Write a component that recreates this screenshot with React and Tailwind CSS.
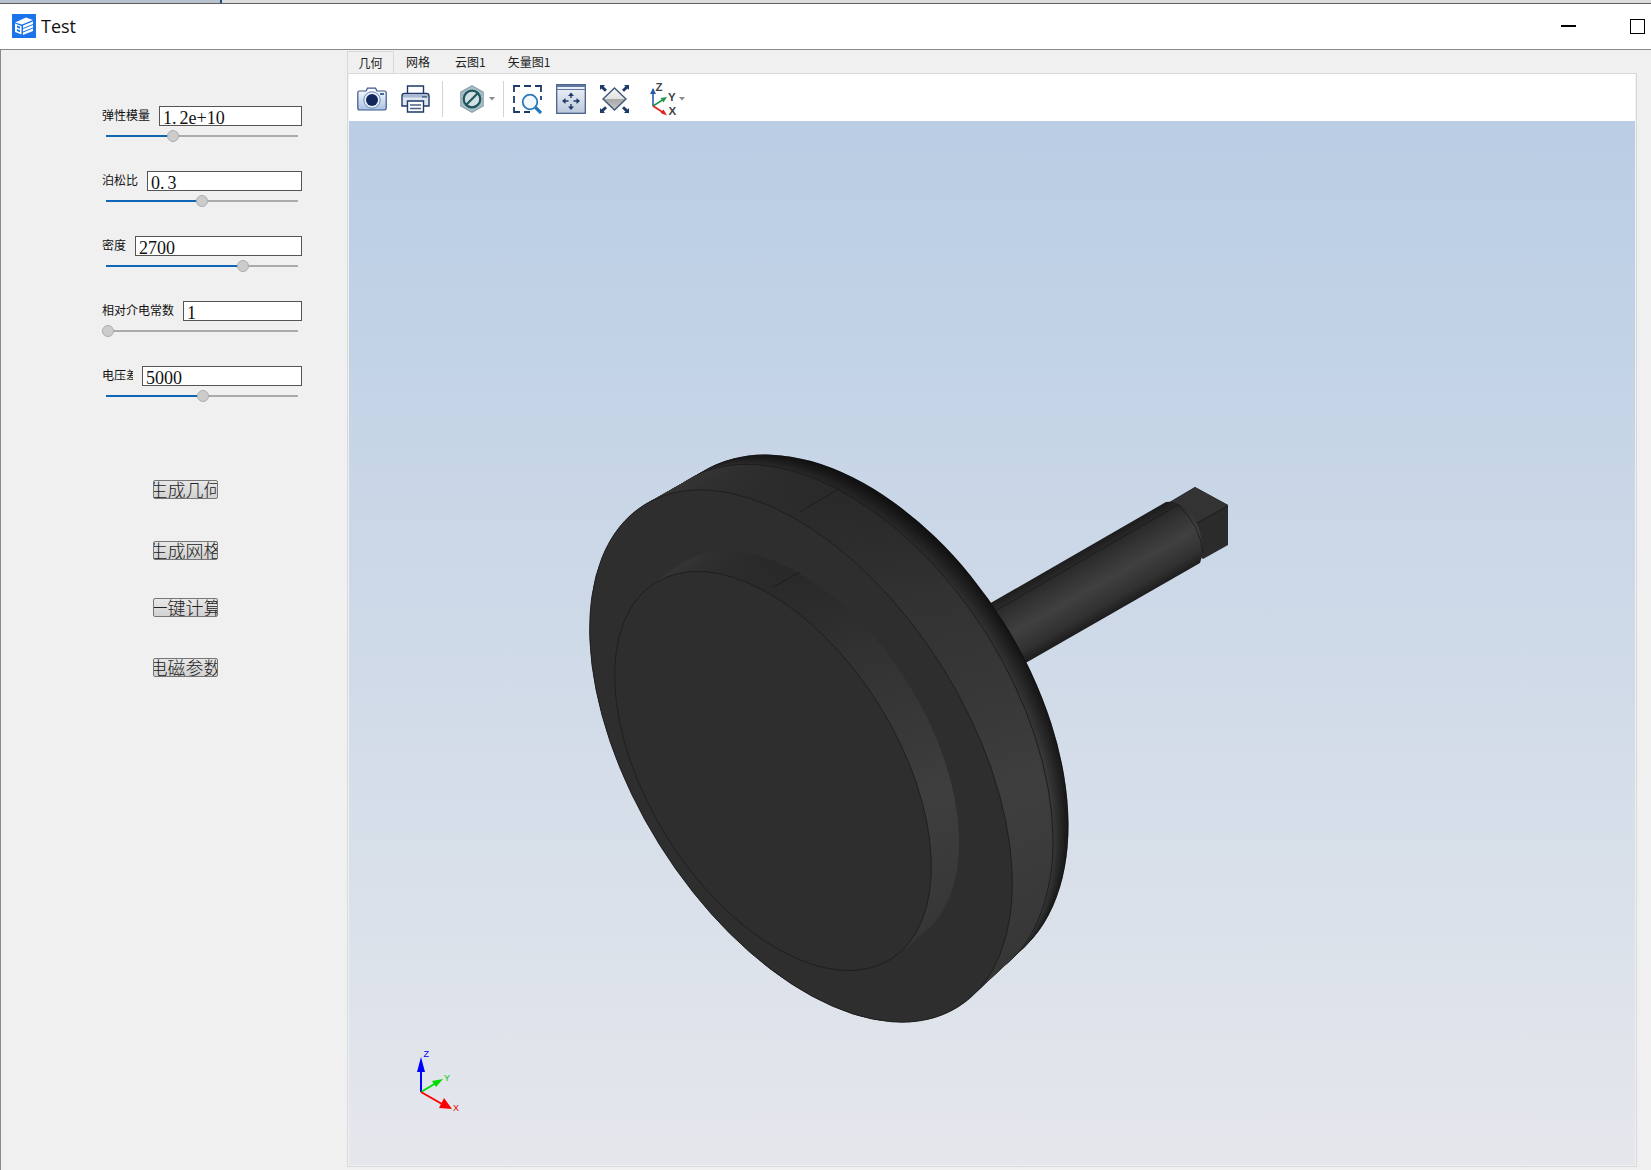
import React from "react";

const NAVY = "#1f3a68";
const CJK = '"Noto Sans CJK SC","Noto Sans",sans-serif';

const params = [
  { label: "弹性模量", value: "1.2e+10", inputW: "w-[143px]", labelW: "w-[50px]", pct: 67 },
  { label: "泊松比", value: "0.3", inputW: "w-[155px]", labelW: "w-[38px]", pct: 96 },
  { label: "密度", value: "2700", inputW: "w-[167px]", labelW: "w-[26px]", pct: 137 },
  { label: "相对介电常数", value: "1", inputW: "w-[119px]", labelW: "w-[74px]", pct: 2 },
  { label: "电压差", value: "5000", inputW: "w-[160px]", labelW: "w-[31px]", pct: 97 },
];

function Value({ text }) {
  const i = text.indexOf(".");
  if (i < 0) return <>{text}</>;
  return (
    <>
      {text.slice(0, i + 1)}
      <span className="inline-block w-[3px]" />
      {text.slice(i + 1)}
    </>
  );
}

function Param({ p }) {
  return (
    <div className="h-[65px] w-[200px]">
      <div className="flex h-[20px] items-center justify-between">
        <span className={`${p.labelW} -mt-[2px] overflow-hidden whitespace-nowrap text-[12px] leading-[20px] text-[#111]`}>
          {p.label}
        </span>
        <div className={`${p.inputW} h-[20px] border border-[#555] bg-white pl-[3px] pt-[1px] font-['Liberation_Serif'] text-[18px] leading-[20px] text-[#111]`}>
          <Value text={p.value} />
        </div>
      </div>
      <div className="relative ml-[4px] mt-[4px] h-[12px] w-[192px]">
        <div className="absolute left-0 right-0 top-[5px] h-[2px] bg-[#ababab]" />
        <div className="absolute left-0 top-[5px] h-[2px] bg-[#0f66b4]" style={{ width: p.pct }} />
        <div
          className="absolute top-0 h-[12px] w-[12px] rounded-full border border-[#adadad] bg-[#cccccc]"
          style={{ left: p.pct - 6 }}
        />
      </div>
    </div>
  );
}

function ActionButton({ label, className }) {
  return (
    <div
      className={`${className} ml-[51px] flex h-[19px] w-[65px] items-center justify-center overflow-hidden whitespace-nowrap rounded-[2px] border border-[#777] bg-gradient-to-b from-[#e8e8e8] to-[#d2d2d2] text-[18px] font-light leading-[19px] text-[#222]`}
    >
      {label}
    </div>
  );
}

function TitleIcon() {
  return (
    <svg width="24" height="24" viewBox="0 0 24 24" className="shrink-0">
      <rect width="24" height="24" fill="#1a73e8" />
      <path d="M3 8.5 L14 3.5 L21 6 L10 10.5Z" fill="#ffffff" />
      <path d="M3 9.5 L9.5 12 V20.5 L3 18Z" fill="#ffffff" />
      <path d="M5 11.5 L8 12.7 V14.8 L5 13.6Z M5 15 L8 16.2 V18.3 L5 17.1Z" fill="#1a73e8" />
      <path d="M11 11.5 L21 7.5 V10 L11 14Z M11 15 L21 11 V13.5 L11 17.5Z M11 18.5 L21 14.5 V17 L11 21Z" fill="#ffffff" />
    </svg>
  );
}

function CameraIcon() {
  return (
    <svg width="30" height="24" viewBox="0 0 30 24" className="shrink-0">
      <defs>
        <linearGradient id="cam" x1="0" y1="0" x2="0" y2="1">
          <stop offset="0" stopColor="#ffffff" />
          <stop offset="1" stopColor="#a9c2e4" />
        </linearGradient>
      </defs>
      <path d="M2.5 4 H9 L10.5 1.2 H18.5 L20 4 H27.5 Q29.2 4 29.2 5.8 V21 Q29.2 23 27.5 23 H2.5 Q.8 23 .8 21 V5.8 Q.8 4 2.5 4Z" fill="url(#cam)" stroke="#3a5788" strokeWidth="1.2" />
      <circle cx="15" cy="13" r="8.2" fill="#e8f0fa" stroke="#6f8db8" strokeWidth="1" />
      <circle cx="15" cy="13" r="6" fill="#14275c" />
      <rect x="23" y="6" width="4" height="2" fill="#4a6796" />
    </svg>
  );
}

function PrinterIcon() {
  return (
    <svg width="29" height="28" viewBox="0 0 29 28" className="shrink-0">
      <path d="M6.5 9 V1 H22.5 V9" fill="#ffffff" stroke={NAVY} strokeWidth="1.4" />
      <path d="M1 11 Q1 8.5 3.5 8.5 H25.5 Q28 8.5 28 11 V21 H1Z" fill="#dfe6f0" stroke={NAVY} strokeWidth="1.4" />
      <rect x="2" y="9.5" width="25" height="3" fill="#a9bbd2" />
      <rect x="21" y="11" width="5" height="1.6" fill="#52688c" />
      <path d="M6.5 16 H22.5 V27 H6.5Z" fill="#ffffff" stroke={NAVY} strokeWidth="1.4" />
      <path d="M9 20 H20 M9 23.5 H20" stroke="#4a6186" strokeWidth="1.3" />
    </svg>
  );
}

function HexIcon() {
  return (
    <svg width="24" height="28" viewBox="0 0 24 28" className="shrink-0">
      <path d="M12 .8 L23.2 7.2 V20.8 L12 27.2 L.8 20.8 V7.2Z" fill="#a9bfc6" stroke="#8ba5ae" strokeWidth="1.2" />
      <circle cx="12" cy="14" r="8.3" fill="#d3e0e2" stroke="#1e5560" strokeWidth="2.2" />
      <path d="M6.5 19.5 L17.5 8.5" stroke="#1e5560" strokeWidth="2.2" />
    </svg>
  );
}

function Caret() {
  return (
    <svg width="6" height="4" viewBox="0 0 6 4" className="shrink-0">
      <path d="M0 0 H6 L3 3.5Z" fill="#8c8c8c" />
    </svg>
  );
}

function ZoomIcon() {
  return (
    <svg width="29" height="29" viewBox="0 0 29 29" className="shrink-0">
      <path d="M1 7 V1 H7 M11 1 H18 M22 1 H28 V7 M28 11 V15 M1 11 V18 M1 22 V27 H7 M11 27 H17" fill="none" stroke={NAVY} strokeWidth="1.8" />
      <circle cx="17" cy="17" r="7.3" fill="#f2f7fc" stroke="#2a79b8" strokeWidth="1.8" />
      <path d="M22.5 22.5 L28 28" stroke="#2079bd" strokeWidth="3.2" />
    </svg>
  );
}

function FitIcon() {
  return (
    <svg width="30" height="30" viewBox="0 0 30 30" className="shrink-0">
      <defs>
        <linearGradient id="fit" x1="0" y1="0" x2="0" y2="1">
          <stop offset="0" stopColor="#f2f4f8" />
          <stop offset="1" stopColor="#bac8dc" />
        </linearGradient>
      </defs>
      <rect x=".7" y=".7" width="28.6" height="28.6" fill="url(#fit)" stroke="#3d5680" strokeWidth="1.2" />
      <rect x="1" y="1" width="28" height="2" fill="#5f7aa2" />
      <rect x="1" y="5" width="28" height="1" fill="#5f7aa2" />
      <path d="M15 8.5 L18 12 H12Z M15 26 L18 22.5 H12Z M6 17 L9.5 14 V20Z M24 17 L20.5 14 V20Z" fill={NAVY} />
      <path d="M15 11 V14 M15 20 V23.5 M9 17 H12.5 M17.5 17 H21" stroke={NAVY} strokeWidth="1.4" />
    </svg>
  );
}

function DiamondIcon() {
  return (
    <svg width="29" height="28" viewBox="0 0 29 28" className="shrink-0">
      <defs>
        <linearGradient id="dia" x1="0" y1="0" x2="0" y2="1">
          <stop offset="0" stopColor="#f6f6f6" />
          <stop offset="0.5" stopColor="#e2e2e2" />
          <stop offset="0.5" stopColor="#a8a8a8" />
          <stop offset="1" stopColor="#c8c8c8" />
        </linearGradient>
      </defs>
      <path d="M14.5 3 L26 14 L14.5 25 L3 14Z" fill="url(#dia)" stroke="#3f5878" strokeWidth="1.4" />
      <path d="M0 0 H5 L3.6 1.4 L7 4.8 L5 6.8 L1.4 3.4 L0 5Z M29 0 H24 L25.4 1.4 L22 4.8 L24 6.8 L27.6 3.4 L29 5Z M0 28 H5 L3.6 26.6 L7 23.2 L5 21.2 L1.4 24.6 L0 23Z M29 28 H24 L25.4 26.6 L22 23.2 L24 21.2 L27.6 24.6 L29 23Z" fill={NAVY} />
    </svg>
  );
}

function AxisIcon() {
  return (
    <svg width="27" height="34" viewBox="0 0 27 34" className="shrink-0 font-['Liberation_Sans']">
      <path d="M3 24 V7" stroke="#2b5caa" strokeWidth="1.6" />
      <path d="M3 6 L6 12 H0Z" fill="#2b5caa" />
      <path d="M3 24 L14 17" stroke="#1f9a4a" strokeWidth="1.6" />
      <path d="M17 15 L10.5 16 L13.5 20.5Z" fill="#1f9a4a" />
      <path d="M3 24 L14 31" stroke="#e02020" strokeWidth="1.6" />
      <path d="M17 33.5 L10.5 31 L13.5 27.5Z" fill="#e02020" />
      <text x="5.5" y="9" fontSize="11.5" fontWeight="700" fill="#444">Z</text>
      <text x="18" y="18.5" fontSize="11.5" fontWeight="700" fill="#444">Y</text>
      <text x="18.5" y="33" fontSize="11.5" fontWeight="700" fill="#444">X</text>
    </svg>
  );
}

const GRAD = [
  [0, "#0c0c0c"],
  [0.08, "#202020"],
  [0.2, "#323232"],
  [0.4, "#3e3e3e"],
  [0.7, "#363636"],
  [0.9, "#2a2a2a"],
  [1, "#0c0c0c"],
];

function Ell({ c, a, b, ...rest }) {
  return <ellipse cx={c[0]} cy={c[1]} rx={a} ry={b} transform={`rotate(58 ${c[0]} ${c[1]})`} {...rest} />;
}

function Sweep({ front, off, a, b, a1, b1, grad, n, edgeFrom, edgeDark, lineAt }) {
  const out = [];
  for (let i = n; i >= 0; i--) {
    const t = i / n;
    const c = [front[0] + off[0] * t, front[1] + off[1] * t];
    const ra = a + (a1 - a) * t;
    const rb = b + (b1 - b) * t;
    out.push(<Ell key={`f${i}`} c={c} a={ra} b={rb} fill={`url(#${grad})`} />);
    if (edgeFrom !== undefined && t > edgeFrom) {
      out.push(<Ell key={`d${i}`} c={c} a={ra} b={rb} fill="#000" fillOpacity={((t - edgeFrom) / (1 - edgeFrom)) * edgeDark} />);
    }
    if (lineAt !== undefined && Math.abs(t - lineAt) < 0.5 / n) {
      out.push(<Ell key={`l${i}`} c={c} a={ra} b={rb} fill="none" stroke="#1a1a1a" strokeWidth="0.8" />);
    }
  }
  return <g>{out}</g>;
}

function Model() {
  return (
    <svg viewBox="349 121 1286 1044" className="absolute inset-0 h-full w-full font-['Liberation_Sans']">
      <defs>
        <linearGradient id="rimA" gradientUnits="userSpaceOnUse" x1="667" y1="490" x2="960" y2="1001">
          {GRAD.map(([o, c]) => <stop key={o} offset={o} stopColor={c} />)}
        </linearGradient>
        <linearGradient id="rimB" gradientUnits="userSpaceOnUse" x1="667" y1="576" x2="890" y2="955">
          {GRAD.map(([o, c]) => <stop key={o} offset={o} stopColor={c} />)}
        </linearGradient>
        <linearGradient id="shaft" gradientUnits="userSpaceOnUse" x1="1093" y1="544" x2="1127" y2="604">
          <stop offset="0" stopColor="#1c1c1c" />
          <stop offset="0.14" stopColor="#2a2a2a" />
          <stop offset="0.3" stopColor="#343434" />
          <stop offset="0.55" stopColor="#404040" />
          <stop offset="0.85" stopColor="#313131" />
          <stop offset="1" stopColor="#1e1e1e" />
        </linearGradient>
      </defs>

      {/* square tip */}
      <path d="M1168 503 L1195 487 L1228 505 V545 L1203 559 L1170 530Z" fill="#2b2b2b" />
      <path d="M1168 503 L1195 487 L1228 505 L1197 523Z" fill="#333333" />
      <path d="M1228 506 L1197 523" stroke="#1a1a1a" strokeWidth="0.8" />
      {/* shaft */}
      <path d="M975 612 L1166 502 Q1178 500 1190 513 Q1203 530 1203 553 L1200 563 L1010 672Z" fill="url(#shaft)" />
      <path d="M995 611 L1178 505" stroke="#1a1a1a" strokeWidth="0.8" />
      <path d="M1178 505 Q1200 525 1203 553" fill="none" stroke="#1a1a1a" strokeWidth="0.8" />

      {/* flange */}
      <Sweep front={[801, 756]} off={[54, -40]} a={296} b={167} a1={288} b1={176} grad="rimA" n={40} edgeFrom={0.72} edgeDark={0.65} lineAt={0.725} />
      <Ell c={[801, 756]} a={296} b={167} fill="#2e2e2e" stroke="#1c1c1c" strokeWidth="0.8" />
      <path d="M800 512 L840 488" stroke="#1a1a1a" strokeWidth="0.8" />

      {/* boss */}
      <Sweep front={[773, 771]} off={[27, -21]} a={222} b={125} a1={221} b1={127} grad="rimB" n={24} />
      <Ell c={[773, 771]} a={222} b={125} fill="#2e2e2e" stroke="#1c1c1c" strokeWidth="0.8" />
      <path d="M773 587 L800 572" stroke="#1a1a1a" strokeWidth="0.8" />

      {/* orientation triad */}
      <path d="M421 1092 V1068" stroke="#0000ff" strokeWidth="2" />
      <path d="M421 1057 L425 1072 H417Z" fill="#0000ff" />
      <path d="M421 1092 L436 1083" stroke="#00dd00" strokeWidth="2" />
      <path d="M443 1079 L432 1081 L436 1087Z" fill="#00dd00" />
      <path d="M421 1092 L442 1104" stroke="#ff0000" strokeWidth="2" />
      <path d="M452 1109 L439 1108 L444 1098Z" fill="#ff0000" />
      <text x="423.5" y="1057" fontSize="9" fill="#0000ff">Z</text>
      <text x="444" y="1081" fontSize="9" fill="#00c800">Y</text>
      <text x="453" y="1111" fontSize="9" fill="#e00000">X</text>
    </svg>
  );
}

const tabs = [
  { label: "几何", cls: "mt-[1px] h-[22px] w-[47px] justify-center border border-b-0 border-[#d9d9d9]" },
  { label: "网格", cls: "ml-[12px]" },
  { label: "云图1", cls: "ml-[25px]" },
  { label: "矢量图1", cls: "ml-[22px]" },
];

export default function App() {
  return (
    <div className="flex h-[1170px] w-[1651px] flex-col overflow-hidden bg-[#f0f0f0]" style={{ fontFamily: CJK }}>
      {/* desktop strip behind the window */}
      <div className="flex h-[3px] shrink-0">
        <div className="w-[220px] bg-[#b7c1cd]" />
        <div className="w-[2px] bg-[#1c4a7a]" />
        <div className="flex-1 bg-[#dcdcdc]" />
      </div>
      {/* title bar */}
      <div className="flex h-[47px] shrink-0 items-center border-y border-t-[#606060] border-b-[#8a8a8a] bg-white pb-[1px] pl-[12px]">
        <TitleIcon />
        <span className="ml-[5px] font-['Open_Sans'] text-[18px] leading-[24px] text-[#111]">Test</span>
        <div className="ml-auto flex items-center">
          <div className="h-[1.5px] w-[15px] bg-black" />
          <div className="ml-[54px] mr-[6px] h-[15px] w-[15px] border-[1.5px] border-black" />
        </div>
      </div>

      <div className="flex min-h-0 flex-1 border-l border-[#8a8a8a]">
        {/* parameter panel */}
        <div className="w-[346px] shrink-0 pl-[101px] pt-[56px]">
          {params.map((p) => (
            <Param key={p.label} p={p} />
          ))}
          <ActionButton label="生成几何" className="mt-[49px]" />
          <ActionButton label="生成网格" className="mt-[42px]" />
          <ActionButton label="一键计算" className="mt-[38px]" />
          <ActionButton label="电磁参数" className="mt-[41px]" />
        </div>

        {/* result area */}
        <div className="w-[1290px] shrink-0">
          <div className="flex h-[23px] items-center text-[12px] leading-[22px] text-[#222]">
            {tabs.map((t) => (
              <div key={t.label} className={`flex items-center ${t.cls}`}>
                {t.label}
              </div>
            ))}
          </div>
          <div className="flex h-[1094px] flex-col border border-[#d9d9d9] px-[1px] pb-[1px]">
            <div className="flex h-[47px] shrink-0 items-center bg-white pl-[8px] pt-[3px]">
              <CameraIcon />
              <div className="ml-[14px]"><PrinterIcon /></div>
              <div className="ml-[12px] h-[36px] w-px bg-[#d4d4d4]" />
              <div className="ml-[17px]"><HexIcon /></div>
              <div className="ml-[5px]"><Caret /></div>
              <div className="ml-[8px] h-[36px] w-px bg-[#d4d4d4]" />
              <div className="ml-[9px]"><ZoomIcon /></div>
              <div className="ml-[14px]"><FitIcon /></div>
              <div className="ml-[14px]"><DiamondIcon /></div>
              <div className="ml-[21px]"><AxisIcon /></div>
              <div className="ml-[2px]"><Caret /></div>
            </div>
            <div className="relative min-h-0 flex-1 bg-gradient-to-b from-[#b9cde4] to-[#e5e7ec]">
              <Model />
            </div>
          </div>
        </div>
      </div>
    </div>
  );
}
